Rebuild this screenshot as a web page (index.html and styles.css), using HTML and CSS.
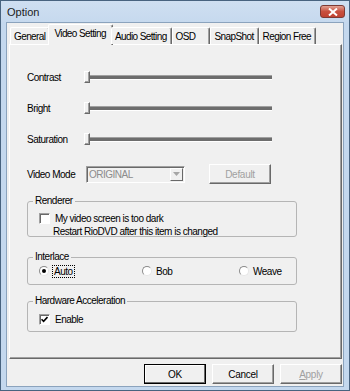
FILE: index.html
```html
<!DOCTYPE html>
<html lang="en">
<head>
    <meta charset="UTF-8">
    <title>Option</title>
    <link rel="stylesheet" href="styles.css">
</head>
<body>
    <div class="window">
        <div class="titlebar">
            <span class="title">Option</span>
            <button class="close-btn">
                <svg width="10" height="8" viewBox="0 0 10 8"><path d="M1 0.5 L9 7.5 M9 0.5 L1 7.5" stroke="#fff" stroke-width="2"/></svg>
            </button>
        </div>

        <div class="client">
            <div class="tabs">
                <div class="tab">General</div>
                <div class="tab active">Video Setting</div>
                <div class="tab">Audio Setting</div>
                <div class="tab tab-osd">OSD</div>
                <div class="tab">SnapShot</div>
                <div class="tab">Region Free</div>
            </div>

            <div class="panel">
                <div class="slider-row">
                    <span class="label">Contrast</span>
                    <div class="slider"><span class="thumb"></span></div>
                </div>
                <div class="slider-row">
                    <span class="label">Bright</span>
                    <div class="slider"><span class="thumb"></span></div>
                </div>
                <div class="slider-row">
                    <span class="label">Saturation</span>
                    <div class="slider"><span class="thumb"></span></div>
                </div>

                <div class="mode-row">
                    <span class="mode-label">Video Mode</span>
                    <div class="combo">
                        <span class="combo-text">ORIGINAL</span>
                        <span class="combo-arrow">
                            <svg width="7" height="4" viewBox="0 0 7 4"><path d="M0 0 H7 L3.5 4 Z" fill="#a6a6a6"/></svg>
                        </span>
                    </div>
                    <div class="btn btn-disabled">Default</div>
                </div>

                <fieldset class="group group-renderer">
                    <legend>Renderer</legend>
                    <label class="check"><span class="box"></span>My video screen is too dark</label>
                    <div class="note">Restart RioDVD after this item is changed</div>
                </fieldset>

                <fieldset class="group group-interlace">
                    <legend>Interlace</legend>
                    <div class="radios">
                        <label class="radio"><span class="dot checked"></span><span class="focus">Auto</span></label>
                        <label class="radio"><span class="dot"></span>Bob</label>
                        <label class="radio"><span class="dot"></span>Weave</label>
                    </div>
                </fieldset>

                <fieldset class="group group-hw">
                    <legend>Hardware Acceleration</legend>
                    <label class="check"><span class="box checked">
                        <svg width="7" height="7" viewBox="0 0 7 7"><path d="M0.5 3.2 L2.6 5.4 L6.5 1" stroke="#000" stroke-width="1.6" fill="none"/></svg>
                    </span>Enable</label>
                </fieldset>
            </div>

            <div class="footer">
                <div class="btn btn-ok">OK</div>
                <div class="btn">Cancel</div>
                <div class="btn btn-disabled"><u>A</u>pply</div>
            </div>
        </div>
    </div>
</body>
</html>
```

FILE: styles.css
```css
* {
    box-sizing: border-box;
}
body {
    margin: 0;
    font-family: "Liberation Sans", Arial, sans-serif;
    font-size: 10px;
    letter-spacing: -0.5px;
    color: #000;
    background: #fff;
}
.window {
    width: 350px;
    height: 391px;
    background: #c4d8ee;
    border: 1px solid #48637f;
    padding: 0 5px 3px 5px;
    display: flex;
    flex-direction: column;
}
.titlebar {
    height: 21px;
    display: flex;
    align-items: center;
    justify-content: space-between;
    background: linear-gradient(#cfdff1, #c6d9ee);
    margin: 0 -5px;
    padding: 0 4px 0 6px;
}
.title {
    font-size: 11px;
    letter-spacing: 0;
    color: #1b1b1b;
    padding-top: 1px;
}
.close-btn {
    width: 25px;
    height: 13px;
    border: 1px solid #7d3a34;
    border-radius: 3px;
    background: linear-gradient(#e2a294, #c8503f 50%, #c04232);
    padding: 0;
    display: flex;
    align-items: center;
    justify-content: center;
}
.client {
    flex: 1;
    background: #f0f0f0;
    border: 1px solid #8ba3bd;
    padding: 1px 1px 0 1px;
    display: flex;
    flex-direction: column;
}
.tabs {
    display: flex;
    align-items: flex-end;
    height: 20px;
    padding-left: 2px;
    position: relative;
    z-index: 1;
}
.tab {
    height: 17px;
    padding: 3px 4px 0 3px;
    background: #f0f0f0;
    border-top: 1px solid #fff;
    border-left: 1px solid #fff;
    border-right: 1px solid #696969;
    border-radius: 2px 2px 0 0;
    box-shadow: inset -1px 0 0 #a0a0a0;
    white-space: nowrap;
    letter-spacing: -0.6px;
}
.tab.active {
    margin: 0 -2px -1px -2px;
    padding: 3px 6px 0 5px;
    height: 21px;
}
.tab-osd {
    padding-right: 14px;
}
.panel {
    height: 315px;
    margin-left: 1px;
    border-top: 1px solid #fff;
    border-left: 1px solid #fff;
    border-right: 1px solid #696969;
    border-bottom: 1px solid #696969;
    box-shadow: inset -1px -1px 0 #a0a0a0;
    padding: 24px 0 0 17px;
    display: flex;
    flex-direction: column;
}
.slider-row {
    display: flex;
    align-items: center;
    height: 16px;
    margin-bottom: 15px;
}
.label {
    flex: none;
    width: 57px;
}
.slider {
    width: 188px;
    height: 14px;
    position: relative;
    display: flex;
    align-items: center;
}
.slider::before {
    content: "";
    display: block;
    width: 100%;
    height: 3px;
    border-top: 1px solid #a0a0a0;
    border-bottom: 1px solid #fff;
    background: #6d6d6d;
}
.thumb {
    position: absolute;
    left: 0;
    top: 1px;
    width: 6px;
    height: 12px;
    background: #f0f0f0;
    border-top: 1px solid #fff;
    border-left: 1px solid #fff;
    border-right: 1px solid #696969;
    border-bottom: 1px solid #696969;
    box-shadow: inset -1px -1px 0 #a0a0a0;
}
.mode-row {
    display: flex;
    align-items: center;
    width: 244px;
    height: 20px;
    margin-top: 2px;
    margin-bottom: 11px;
}
.mode-label {
    width: 59px;
    flex: none;
    white-space: nowrap;
}
.combo {
    flex: none;
    width: 99px;
    height: 17px;
    border: 1px solid #a0a0a0;
    border-right-color: #fff;
    border-bottom-color: #fff;
    box-shadow: inset 1px 1px 0 #696969;
    display: flex;
    align-items: center;
    justify-content: space-between;
    padding: 0 1px 0 2px;
    color: #8c8c8c;
    margin-right: 24px;
}
.combo-text {
    padding-top: 1px;
}
.combo-arrow {
    width: 13px;
    height: 13px;
    border-top: 1px solid #fff;
    border-left: 1px solid #fff;
    border-right: 1px solid #696969;
    border-bottom: 1px solid #696969;
    display: flex;
    align-items: center;
    justify-content: center;
}
.btn {
    flex: none;
    width: 62px;
    height: 20px;
    display: flex;
    align-items: center;
    justify-content: center;
    letter-spacing: -0.3px;
    color: #000;
    background: #f0f0f0;
    border-top: 1px solid #fff;
    border-left: 1px solid #fff;
    border-right: 1px solid #696969;
    border-bottom: 1px solid #696969;
    box-shadow: inset -1px -1px 0 #a0a0a0;
}
.btn-disabled {
    color: #a0a0a0;
}
.group {
    width: 270px;
    margin: 0;
    border: 1px solid #b5b5b5;
    border-radius: 3px;
    padding: 0 0 0 11px;
}
.group legend {
    padding: 0 2px;
    margin-left: -6px;
    line-height: 12px;
}
.group-renderer {
    height: 42px;
}
.group-interlace {
    height: 34px;
    margin-top: 14px;
}
.group-hw {
    height: 37px;
    margin-top: 10px;
}
.check {
    display: flex;
    align-items: center;
    height: 13px;
    margin-top: 5px;
}
.box {
    width: 11px;
    height: 11px;
    margin-right: 5px;
    background: #fff;
    border: 1px solid #a0a0a0;
    border-right-color: #fff;
    border-bottom-color: #fff;
    box-shadow: inset 1px 1px 0 #696969;
    display: flex;
    align-items: center;
    justify-content: center;
}
.note {
    margin-top: 1px;
    padding-left: 14px;
}
.group-hw .check {
    margin-top: 6px;
}
.radios {
    display: flex;
    margin-top: 1px;
}
.radio {
    display: flex;
    align-items: center;
    height: 14px;
}
.radio:nth-child(1) {
    width: 103px;
}
.radio:nth-child(2) {
    width: 97px;
}
.dot {
    width: 10px;
    height: 10px;
    border-radius: 50%;
    background: #fff;
    border: 1px solid #8a8a8a;
    border-right-color: #e6e6e6;
    border-bottom-color: #e6e6e6;
    margin-right: 4px;
    display: flex;
    align-items: center;
    justify-content: center;
}
.dot.checked::after {
    content: "";
    width: 4px;
    height: 4px;
    border-radius: 50%;
    background: #000;
}
.focus {
    outline: 1px dotted #000;
    padding: 0 1px;
}
.footer {
    flex: 1;
    display: flex;
    justify-content: flex-end;
    align-items: flex-start;
    gap: 6px;
    padding-top: 5px;
}
.btn-ok {
    border: 1px solid #000;
    box-shadow: inset -1px -1px 0 #696969, inset 1px 1px 0 #fff;
}
```
